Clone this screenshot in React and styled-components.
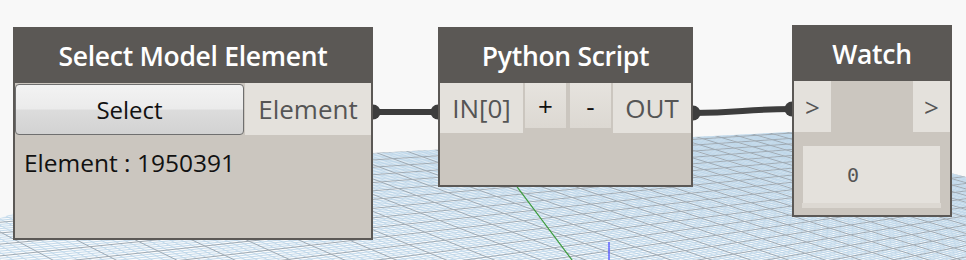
import React from "react";
import styled, { createGlobalStyle } from "styled-components";

const GlobalStyle = createGlobalStyle`
  body {
    margin: 0;
    background: #f8f8f8;
  }
`;

const Canvas = styled.div`
  position: relative;
  width: 966px;
  height: 260px;
  overflow: hidden;
  background: #f8f8f8;
  font-family: "Open Sans", "Noto Sans", sans-serif;
`;

const Layer = styled.svg`
  position: absolute;
  left: 0;
  top: 0;
  width: 966px;
  height: 260px;
`;

const Node = styled.div`
  position: absolute;
  left: ${(p) => p.$x}px;
  top: ${(p) => p.$y}px;
  width: ${(p) => p.$w}px;
  height: ${(p) => p.$h}px;
  box-sizing: border-box;
  border: 2px solid #5b5855;
  background: #cbc6bf;
  display: flex;
  flex-direction: column;
`;

const NodeHeader = styled.div`
  height: 54px;
  flex: none;
  background: #5b5855;
  color: #fff;
  font-size: 26.5px;
  font-weight: 600;
  display: flex;
  align-items: center;
  justify-content: center;
  letter-spacing: -0.3px;
`;

const PortRow = styled.div`
  display: flex;
  height: ${(p) => p.$h}px;
  gap: ${(p) => p.$gap || 0}px;
  flex: none;
`;

const Port = styled.div`
  width: ${(p) => (p.$w ? `${p.$w}px` : "auto")};
  flex: ${(p) => (p.$w ? "none" : 1)};
  background: #e4e1dc;
  color: #555;
  font-size: 26px;
  display: flex;
  align-items: center;
  justify-content: center;
`;

const Spacer = styled.div`
  flex: 1;
`;

const SelectButton = styled.button`
  width: 229px;
  height: 51px;
  margin-top: 1px;
  box-sizing: border-box;
  border: 1px solid #6f6f6f;
  border-radius: 4px;
  background: linear-gradient(#f3f3f3 0%, #ebebeb 48%, #dcdcdc 52%, #d2d2d2 100%);
  font-family: inherit;
  font-size: 24px;
  color: #111;
  padding: 0;
`;

const PortButton = styled.div`
  width: 41px;
  height: 45px;
  margin-left: ${(p) => p.$gap}px;
  background: linear-gradient(#e6e3de, #dcd8d2);
  color: #111;
  font-size: 26px;
  display: flex;
  justify-content: center;
  padding-top: 10px;
  box-sizing: border-box;
  line-height: 26px;
`;

const NodeBody = styled.div`
  flex: 1;
  padding: ${(p) => p.$pad || "0"};
  font-size: 24.5px;
  color: #111;
`;

const WatchBox = styled.div`
  height: 57px;
  background: #e4e1dc;
  color: #555;
  font-family: "DejaVu Sans Mono", "Liberation Mono", monospace;
  font-size: 20px;
  display: flex;
  align-items: center;
  padding-left: 44px;
`;

const ScrollBar = styled.div`
  height: 5px;
  margin: 0 -1px;
  background: #dcd8d2;
`;

function makeMap(q) {
  const [[x0, y0], [x1, y1], [x2, y2], [x3, y3]] = q;
  const dx1 = x1 - x2, dx2 = x3 - x2, dx3 = x0 - x1 + x2 - x3;
  const dy1 = y1 - y2, dy2 = y3 - y2, dy3 = y0 - y1 + y2 - y3;
  const den = dx1 * dy2 - dx2 * dy1;
  const g = (dx3 * dy2 - dx2 * dy3) / den;
  const h = (dx1 * dy3 - dx3 * dy1) / den;
  const a = x1 - x0 + g * x1, b = x3 - x0 + h * x3, c = x0;
  const d = y1 - y0 + g * y1, e = y3 - y0 + h * y3, f = y0;
  return (u, v) => {
    const w = g * u + h * v + 1;
    return [(a * u + b * v + c) / w, (d * u + e * v + f) / w];
  };
}

function GroundGrid() {
  const map = makeMap([
    [792, 128],
    [-700, 217],
    [420, 1500],
    [1600, 354],
  ]);
  const n = 200;
  const minor = [];
  const major = [];
  for (let i = 0; i <= n; i++) {
    const t = i / n;
    const [ax, ay] = map(t, 0);
    const [bx, by] = map(t, 1);
    const [cx, cy] = map(0, t);
    const [dx, dy] = map(1, t);
    const target = i % 5 === 0 ? major : minor;
    target.push(`M${ax.toFixed(1)} ${ay.toFixed(1)}L${bx.toFixed(1)} ${by.toFixed(1)}`);
    target.push(`M${cx.toFixed(1)} ${cy.toFixed(1)}L${dx.toFixed(1)} ${dy.toFixed(1)}`);
  }
  return (
    <Layer viewBox="0 0 966 260">
      <defs>
        <clipPath id="ground">
          <polygon points="0,218 40,205 372,153 792,132 966,177 966,260 0,260" />
        </clipPath>
      </defs>
      <g clipPath="url(#ground)">
        <rect x="0" y="0" width="966" height="260" fill="#f8fafc" />
        <path d={minor.join("")} stroke="#bdd6e9" strokeWidth="0.9" fill="none" />
        <path d={major.join("")} stroke="#9eaab4" strokeWidth="1" fill="none" />
        <line x1="497" y1="160" x2="578" y2="268" stroke="#3c9b3c" strokeWidth="1.2" />
        <line x1="609" y1="242" x2="609" y2="262" stroke="#5a5aff" strokeWidth="1.4" />
      </g>
    </Layer>
  );
}

function Wires() {
  const dots = [
    [373, 112],
    [438, 112],
    [693, 113],
    [792, 109],
  ];
  return (
    <Layer viewBox="0 0 966 260">
      <path d="M373 112 L438 112" stroke="#3d3d3d" strokeWidth="6" fill="none" />
      <path d="M693 113 C740 113 745 109 792 109" stroke="#3d3d3d" strokeWidth="6" fill="none" />
      {dots.map(([x, y]) => (
        <circle key={x} cx={x} cy={y} r="7.5" fill="#3d3d3d" />
      ))}
    </Layer>
  );
}

export default function App() {
  return (
    <>
      <GlobalStyle />
      <Canvas>
        <GroundGrid />
        <Wires />

        <Node $x={13} $y={27} $w={360} $h={213}>
          <NodeHeader>Select Model Element</NodeHeader>
          <PortRow $h={52} $gap={1}>
            <SelectButton>Select</SelectButton>
            <Port>Element</Port>
          </PortRow>
          <NodeBody $pad="11px 0 0 9px">Element : 1950391</NodeBody>
        </Node>

        <Node $x={438} $y={27} $w={255} $h={160}>
          <NodeHeader>Python Script</NodeHeader>
          <PortRow $h={50}>
            <Port $w={83}>IN[0]</Port>
            <PortButton $gap={2}>+</PortButton>
            <PortButton $gap={4}>-</PortButton>
            <Spacer />
            <Port $w={78}>OUT</Port>
          </PortRow>
          <NodeBody />
        </Node>

        <Node $x={792} $y={25} $w={160} $h={192}>
          <NodeHeader>Watch</NodeHeader>
          <PortRow $h={51}>
            <Port $w={37}>&gt;</Port>
            <Spacer />
            <Port $w={37}>&gt;</Port>
          </PortRow>
          <NodeBody $pad="14px 10px 0 9px">
            <WatchBox>0</WatchBox>
            <ScrollBar />
          </NodeBody>
        </Node>
      </Canvas>
    </>
  );
}
